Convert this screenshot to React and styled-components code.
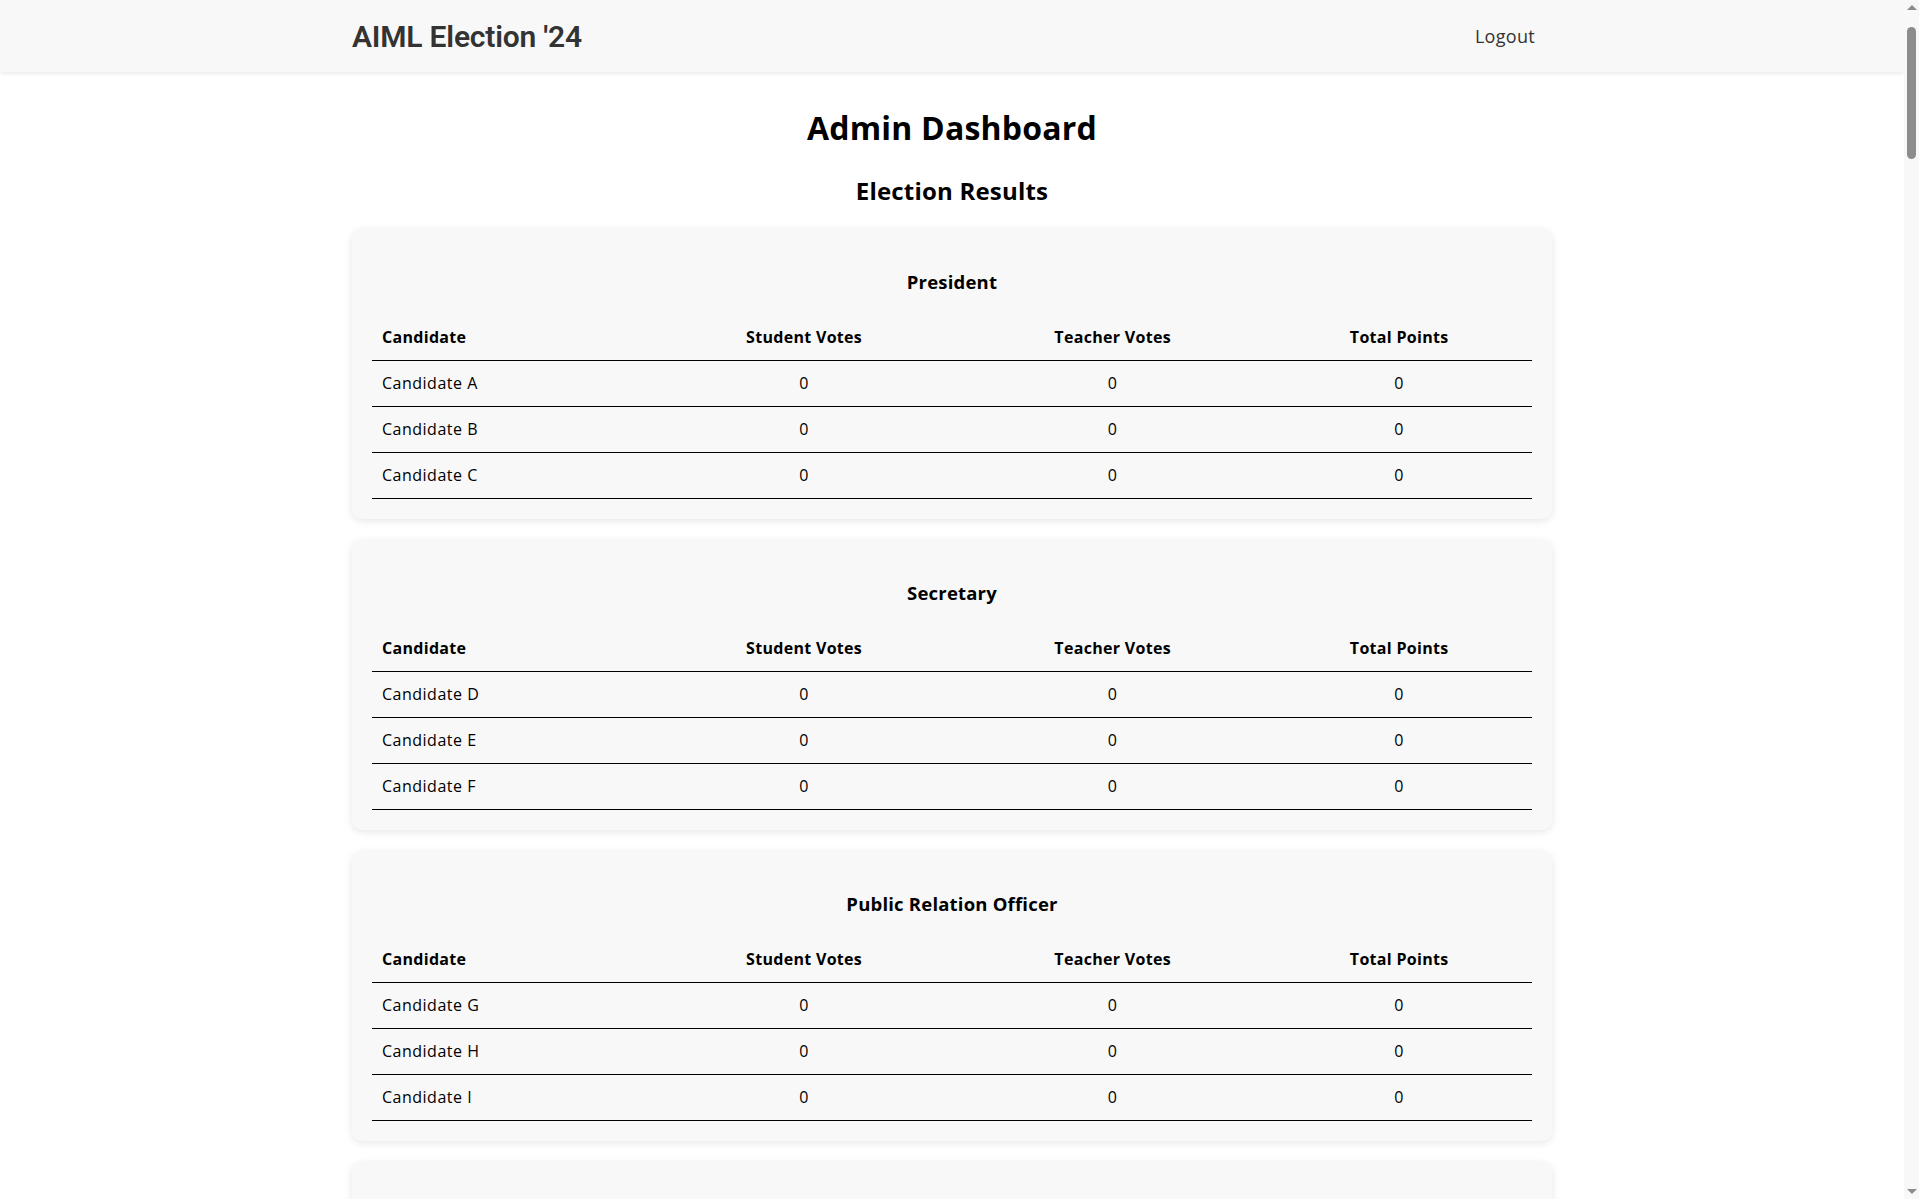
import React from 'react';
import styled, { createGlobalStyle } from 'styled-components';

const GlobalStyle = createGlobalStyle`
  * {
    box-sizing: border-box;
  }

  html, body {
    overflow-x: hidden;
  }

  body {
    margin: 0;
    background: #fff;
    color: #000;
    font-family: 'Open Sans', 'Noto Sans', sans-serif;
  }
`;

const positions = [
  { title: 'President', candidates: ['Candidate A', 'Candidate B', 'Candidate C'] },
  { title: 'Secretary', candidates: ['Candidate D', 'Candidate E', 'Candidate F'] },
  { title: 'Public Relation Officer', candidates: ['Candidate G', 'Candidate H', 'Candidate I'] },
  { title: 'Treasurer', candidates: ['Candidate J', 'Candidate K', 'Candidate L'] },
  { title: 'Joint Secretary', candidates: ['Candidate M', 'Candidate N', 'Candidate O'] },
  { title: 'Sports Secretary', candidates: ['Candidate P', 'Candidate Q', 'Candidate R'] },
  { title: 'Cultural Secretary', candidates: ['Candidate S', 'Candidate T', 'Candidate U'] },
  { title: 'Technical Head', candidates: ['Candidate V', 'Candidate W', 'Candidate X'] },
];

const Page = styled.div`
  margin-right: 15px;
`;

const Header = styled.header`
  height: 72px;
  background: #f8f8f8;
  box-shadow: 0 2px 4px rgba(0, 0, 0, 0.08);
`;

const HeaderInner = styled.div`
  max-width: 1200px;
  height: 100%;
  margin: 0 auto;
  display: flex;
  align-items: center;
  justify-content: space-between;
`;

const Brand = styled.div`
  font-family: Roboto, 'Liberation Sans', sans-serif;
  font-size: 30px;
  font-weight: 600;
  color: #333;
  letter-spacing: -0.2px;
`;

const LogoutLink = styled.a`
  padding: 0 17px;
  font-size: 18px;
  letter-spacing: 0.3px;
  color: #333;
  text-decoration: none;
  cursor: pointer;
`;

const Main = styled.main`
  max-width: 1200px;
  margin: 0 auto;
  padding: 11px 0 40px;
`;

const PageTitle = styled.h1`
  margin: 21px 0;
  text-align: center;
  font-size: 32px;
  line-height: 48px;
  font-weight: 700;
  letter-spacing: 0.2px;
`;

const SectionTitle = styled.h2`
  margin: 21px 0 20px;
  text-align: center;
  font-size: 24px;
  line-height: 36px;
  font-weight: 700;
  letter-spacing: 0.2px;
`;

const Card = styled.section`
  background: #f8f8f8;
  border-radius: 10px;
  padding: 20px;
  margin-bottom: 21px;
  box-shadow: 0 2px 8px rgba(0, 0, 0, 0.1);
`;

const CardTitle = styled.h3`
  margin: 19px 0;
  text-align: center;
  font-size: 18.5px;
  line-height: 28px;
  font-weight: 700;
  letter-spacing: 0.2px;
`;

const Table = styled.table`
  width: 100%;
  border-collapse: collapse;
  table-layout: fixed;
`;

const Col = styled.col`
  width: ${(p) => p.$w};
`;

const Th = styled.th`
  padding: 10px;
  line-height: 25px;
  font-size: 16px;
  font-weight: 700;
  letter-spacing: 0.3px;
  text-align: ${(p) => (p.$left ? 'left' : 'center')};
  border-bottom: 1px solid #000;
`;

const Td = styled.td`
  padding: 10px;
  line-height: 25px;
  font-size: 16px;
  letter-spacing: 0.5px;
  text-align: ${(p) => (p.$left ? 'left' : 'center')};
  border-bottom: 1px solid #000;
`;

const ScrollTrack = styled.div`
  position: fixed;
  top: 0;
  right: 0;
  width: 15px;
  height: 100vh;
  background: #f8f8f8;
  display: flex;
  flex-direction: column;
  align-items: center;
`;

const Arrow = styled.div`
  width: 0;
  height: 0;
  margin: ${(p) => (p.$down ? 'auto 0 5px' : '5px 0 0')};
  border-left: 5px solid transparent;
  border-right: 5px solid transparent;
  ${(p) => (p.$down ? 'border-top: 5px solid #8c8c8c;' : 'border-bottom: 5px solid #8c8c8c;')}
`;

const Thumb = styled.div`
  width: 9px;
  height: 132px;
  margin-top: 17px;
  border-radius: 5px;
  background: #8c8c8c;
`;

const ResultCard = ({ title, candidates }) => (
  <Card>
    <CardTitle>{title}</CardTitle>
    <Table>
      <colgroup>
        <Col $w="23.9%" />
        <Col $w="26.7%" />
        <Col $w="26.5%" />
        <Col $w="22.9%" />
      </colgroup>
      <thead>
        <tr>
          <Th $left>Candidate</Th>
          <Th>Student Votes</Th>
          <Th>Teacher Votes</Th>
          <Th>Total Points</Th>
        </tr>
      </thead>
      <tbody>
        {candidates.map((name) => (
          <tr key={name}>
            <Td $left>{name}</Td>
            <Td>0</Td>
            <Td>0</Td>
            <Td>0</Td>
          </tr>
        ))}
      </tbody>
    </Table>
  </Card>
);

const App = () => {
  return (
    <>
      <GlobalStyle />
      <Page>
        <Header>
          <HeaderInner>
            <Brand>AIML Election '24</Brand>
            <LogoutLink>Logout</LogoutLink>
          </HeaderInner>
        </Header>
        <Main>
          <PageTitle>Admin Dashboard</PageTitle>
          <SectionTitle>Election Results</SectionTitle>
          {positions.map((p) => (
            <ResultCard key={p.title} title={p.title} candidates={p.candidates} />
          ))}
        </Main>
      </Page>
      <ScrollTrack>
        <Arrow />
        <Thumb />
        <Arrow $down />
      </ScrollTrack>
    </>
  );
};

export default App;
